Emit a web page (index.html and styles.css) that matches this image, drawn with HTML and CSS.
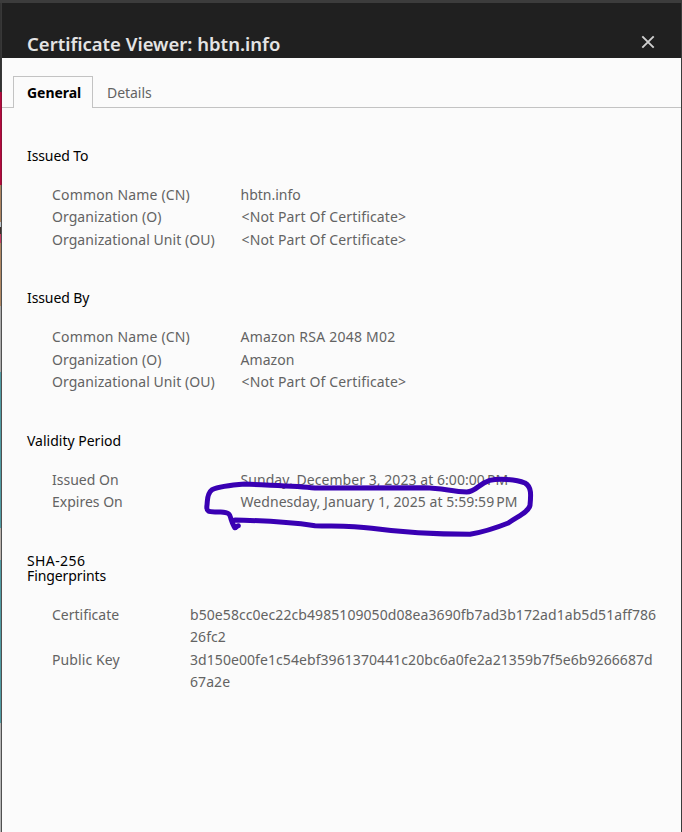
FILE: index.html
```html
<!DOCTYPE html>
<html lang="en">
<head>
<meta charset="utf-8">
<title>Certificate Viewer: hbtn.info</title>
<link rel="stylesheet" href="styles.css">
</head>
<body>
<main class="dialog">
  <header class="titlebar">
    <h1>Certificate Viewer: hbtn.info</h1>
    <button class="close" aria-label="Close"><svg width="14" height="14" viewBox="0 0 14 14"><path d="M1.3 1.3 12.7 12.7M12.7 1.3 1.3 12.7"/></svg></button>
  </header>
  <nav class="tabs">
    <span class="tab active">General</span>
    <span class="tab">Details</span>
  </nav>
  <div class="content">
    <section>
      <h2>Issued To</h2>
      <dl>
        <dt class="cn">Common Name (CN)</dt><dd>hbtn.info</dd>
        <dt class="org">Organization (O)</dt><dd class="missing">&lt;Not Part Of Certificate&gt;</dd>
        <dt class="unit">Organizational Unit (OU)</dt><dd class="missing">&lt;Not Part Of Certificate&gt;</dd>
      </dl>
    </section>
    <section class="issuer">
      <h2>Issued By</h2>
      <dl>
        <dt class="cn">Common Name (CN)</dt><dd class="issuer-name">Amazon RSA 2048 M02</dd>
        <dt class="org">Organization (O)</dt><dd class="org">Amazon</dd>
        <dt class="unit">Organizational Unit (OU)</dt><dd class="missing">&lt;Not Part Of Certificate&gt;</dd>
      </dl>
    </section>
    <section class="validity">
      <h2 class="period">Validity Period</h2>
      <dl>
        <dt>Issued On</dt><dd class="date">Sunday, December 3, 2023 at 6:00:00<span class="thin"></span>PM</dd>
        <dt>Expires On</dt><dd class="date">Wednesday, January 1, 2025 at 5:59:59<span class="thin"></span>PM</dd>
      </dl>
      <svg class="scribble" width="345" height="75" viewBox="0 0 1035 225"><path d="M120 165C180 167 250 167 360 182C420 184 470 182 530 190C610 201 700 208 825 208C870 200 900 190 940 174C970 153 1000 142 1005 121C1008 90 1010 65 990 54C960 42 910 40 884 46C845 59 845 80 815 81C770 79 740 69 690 68L360 69C300 62 210 61 150 57C110 60 70 65 51 74C35 86 38 105 36 120C32 146 47 140 77 141C105 142 105 150 108 162C113 178 117 183 119 188C123 190 123 183 130 182"/></svg>
    </section>
    <section class="fingerprints">
      <h2><span class="sha">SHA-256</span><br>Fingerprints</h2>
      <dl>
        <dt>Certificate</dt><dd class="hash">b50e58cc0ec22cb4985109050d08ea3690fb7ad3b172ad1ab5d51aff786<br>26fc2</dd>
        <dt class="key">Public Key</dt><dd class="hash">3d150e00fe1c54ebf3961370441c20bc6a0fe2a21359b7f5e6b9266687d<br>67a2e</dd>
      </dl>
    </section>
  </div>
</main>
</body>
</html>
```
FILE: styles.css
```css
* { box-sizing: border-box; }
body {
  margin: 0;
  height: 832px;
  padding: 3px 1px 0 2px;
  overflow: hidden;
  font: 14px/22.5px "Noto Sans", sans-serif;
  color: #636363;
  background:
    linear-gradient(#3c3c3c, #3c3c3c) 0 0 / 100% 3px no-repeat,
    linear-gradient(#3b3b3b, #3b3b3b) 100% 0 / 1px 100% no-repeat,
    linear-gradient(#383838 92px, #8d1237 92px 185px, #505050 185px) 1px 0 / 1px 100% no-repeat,
    linear-gradient(#333 92px, #b3093d 92px 185px, #ad835f 185px 222px, #bcc4ca 222px 227px, #3c302a 227px 234px, #c43d61 234px 243px, #b08762 243px 306px, #aaa 306px 372px, #509ba3 372px 528px, #b9b1ab 528px 560px, #509ba3 560px 723px, #b5b5b5 723px) 0 0 / 1px 100% no-repeat;
}
.dialog { height: 829px; background: #fbfbfb; }
.titlebar {
  display: flex;
  justify-content: space-between;
  height: 55px;
  padding: 28px 26px 0 25px;
  background: #202020;
  color: #e4e4e4;
}
h1 { margin: 0; font-size: 18.5px; line-height: 26px; font-weight: 600; }
.close { width: 14px; height: 14px; margin-top: 4px; padding: 0; border: 0; background: none; }
.close svg { display: block; fill: none; stroke: #d0d0d0; stroke-width: 1.9; }
.tabs {
  display: flex;
  height: 50px;
  padding: 18px 0 0 11px;
  border-bottom: 1px solid #c3c3c3;
}
.tab { height: 32px; padding: 6px 14px 0; line-height: 22px; letter-spacing: -0.05px; }
.tab.active {
  width: 80px;
  padding: 5px 0 0 13px;
  border: 1px solid #c3c3c3;
  border-bottom: 0;
  background: #fbfbfb;
  color: #000;
  font-weight: 700;
}
.content { padding: 40px 0 0 25px; }
section { margin-bottom: 39.5px; }
h2 { margin: 0 0 20.5px; font-size: 14px; line-height: 15px; font-weight: 400; letter-spacing: -0.1px; color: #000; }
.issuer { padding-top: 0; }
.issuer h2 { margin: -0.5px 0 21px; }
.period { letter-spacing: 0; }
.sha { letter-spacing: 0.4px; }
dl { display: grid; grid-template-columns: 188.5px 1fr; margin: 0; padding-left: 25px; white-space: nowrap; }
dt, dd { margin: 0; }
.cn { letter-spacing: 0.17px; }
.org, .unit, .date { letter-spacing: 0.06px; }
.missing { padding-left: 1px; letter-spacing: 0.14px; }
.issuer-name { letter-spacing: 0.23px; }
.hash { letter-spacing: 0.07px; }
.key { letter-spacing: 0.1px; }
.fingerprints dl { grid-template-columns: 138px 1fr; }
.thin { display: inline-block; width: 2px; }
.validity { position: relative; }
.scribble { position: absolute; left: 168px; top: 32px; fill: none; stroke: #3900b3; stroke-width: 15; stroke-linecap: round; stroke-linejoin: round; }
```
